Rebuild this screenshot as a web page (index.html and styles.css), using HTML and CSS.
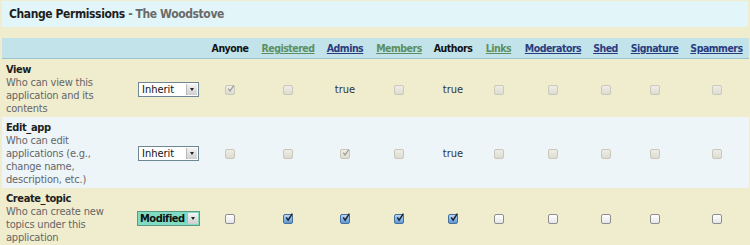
FILE: index.html
```html
<!DOCTYPE html>
<html>
<head>
<meta charset="utf-8">
<link rel="stylesheet" href="styles.css">
</head>
<body>
<div class="page">
  <div class="titlebar"><span class="title-main">Change Permissions</span><span class="title-sub"> - The Woodstove</span></div>
  <table class="perms">
    <colgroup>
      <col class="c-label"><col class="c-sel">
      <col class="c1"><col class="c2"><col class="c3"><col class="c4"><col class="c5">
      <col class="c6"><col class="c7"><col class="c8"><col class="c9"><col class="c10">
    </colgroup>
    <thead>
      <tr>
        <th></th><th></th>
        <th class="plain">Anyone</th>
        <th><a class="visited">Registered</a></th>
        <th><a class="link">Admins</a></th>
        <th><a class="visited">Members</a></th>
        <th class="plain">Authors</th>
        <th><a class="visited">Links</a></th>
        <th><a class="link">Moderators</a></th>
        <th><a class="link">Shed</a></th>
        <th><a class="link">Signature</a></th>
        <th><a class="link">Spammers</a></th>
      </tr>
    </thead>
    <tbody>
      <tr class="row-a">
        <td class="label"><div class="name">View</div><div class="desc">Who can view this application and its contents</div></td>
        <td class="sel"><span class="dropdown"><span class="dd-text">Inherit</span><span class="dd-btn"><span class="tri"></span></span></span></td>
        <td><span class="cb dis"><svg viewBox="0 0 10 10"><path d="M2.3 4.6 L4 7 L7.8 1.6" fill="none" stroke="#9a9a92" stroke-width="1.2"/></svg></span></td>
        <td><span class="cb dis"></span></td>
        <td class="val">true</td>
        <td><span class="cb dis"></span></td>
        <td class="val">true</td>
        <td><span class="cb dis"></span></td>
        <td><span class="cb dis"></span></td>
        <td><span class="cb dis"></span></td>
        <td><span class="cb dis"></span></td>
        <td><span class="cb dis"></span></td>
      </tr>
      <tr class="row-b">
        <td class="label"><div class="name">Edit_app</div><div class="desc">Who can edit applications (e.g., change name, description, etc.)</div></td>
        <td class="sel"><span class="dropdown"><span class="dd-text">Inherit</span><span class="dd-btn"><span class="tri"></span></span></span></td>
        <td><span class="cb dis"></span></td>
        <td><span class="cb dis"></span></td>
        <td><span class="cb dis"><svg viewBox="0 0 10 10"><path d="M2.3 4.6 L4 7 L7.8 1.6" fill="none" stroke="#9a9a92" stroke-width="1.2"/></svg></span></td>
        <td><span class="cb dis"></span></td>
        <td class="val">true</td>
        <td><span class="cb dis"></span></td>
        <td><span class="cb dis"></span></td>
        <td><span class="cb dis"></span></td>
        <td><span class="cb dis"></span></td>
        <td><span class="cb dis"></span></td>
      </tr>
      <tr class="row-a">
        <td class="label"><div class="name">Create_topic</div><div class="desc">Who can create new topics under this application</div></td>
        <td class="sel"><span class="dropdown mod"><span class="dd-text">Modified</span><span class="dd-btn"><span class="tri"></span></span></span></td>
        <td><span class="cb"></span></td>
        <td><span class="cb on"><svg viewBox="0 0 10 10"><path d="M2.2 4.4 L4.1 7.2 L8.4 0.6" fill="none" stroke="#1c2430" stroke-width="1.5"/></svg></span></td>
        <td><span class="cb on"><svg viewBox="0 0 10 10"><path d="M2.2 4.4 L4.1 7.2 L8.4 0.6" fill="none" stroke="#1c2430" stroke-width="1.5"/></svg></span></td>
        <td><span class="cb on"><svg viewBox="0 0 10 10"><path d="M2.2 4.4 L4.1 7.2 L8.4 0.6" fill="none" stroke="#1c2430" stroke-width="1.5"/></svg></span></td>
        <td><span class="cb on"><svg viewBox="0 0 10 10"><path d="M2.2 4.4 L4.1 7.2 L8.4 0.6" fill="none" stroke="#1c2430" stroke-width="1.5"/></svg></span></td>
        <td><span class="cb"></span></td>
        <td><span class="cb"></span></td>
        <td><span class="cb"></span></td>
        <td><span class="cb"></span></td>
        <td><span class="cb"></span></td>
      </tr>
    </tbody>
  </table>
</div>
</body>
</html>
```
FILE: styles.css
```css
html, body {
  margin: 0;
  padding: 0;
  background: #f0edcf;
}
body {
  font-family: "DejaVu Sans Condensed", "DejaVu Sans", sans-serif;
  font-stretch: condensed;
  font-size: 11px;
  color: #222;
}
.page {
  padding: 1px 1px 0 2px;
}
.titlebar {
  background: #e2f5f9;
  height: 26px;
  line-height: 27px;
  padding-left: 7px;
  font-size: 12px;
  letter-spacing: -0.4px;
  font-weight: bold;
  margin-right: 1px;
}
.title-main { color: #1e1e1e; }
.title-sub { color: #6a6a6a; }

.perms {
  margin-top: 11px;
  width: 747px;
  table-layout: fixed;
  border-collapse: collapse;
}
.c-label { width: 133px; }
.c-sel { width: 70px; }
.c1 { width: 50px; }
.c2 { width: 66px; }
.c3 { width: 48px; }
.c4 { width: 60px; }
.c5 { width: 48px; }
.c6 { width: 43px; }
.c7 { width: 66px; }
.c8 { width: 39px; }
.c9 { width: 59px; }
.c10 { width: 65px; }

.perms thead tr {
  background: #c2e3e9;
  border-bottom: 1px solid #9fc3cd;
}
.perms th {
  height: 20px;
  padding: 0;
  font-size: 10.5px;
  letter-spacing: -0.5px;
  font-weight: bold;
  text-align: center;
  vertical-align: middle;
  white-space: nowrap;
}
.plain { color: #111; }
.link { color: #2a3c80; text-decoration: underline; }
.visited { color: #5b8f62; text-decoration: underline; }

.row-a { background: #f0edcf; }
.row-b { background: #edf5f9; }
.perms td {
  padding: 4px 0 2px 0;
  text-align: center;
  vertical-align: middle;
}
.perms td.label {
  text-align: left;
  padding-left: 4px;
  padding-right: 20px;
  line-height: 13px;
}
.name {
  font-weight: bold;
  letter-spacing: -0.4px;
  color: #1e1e1e;
}
.desc {
  color: #666;
  letter-spacing: -0.2px;
}
.perms td.sel {
  text-align: left;
  padding-left: 3px;
}
.val {
  color: #333;
}

.dropdown {
  display: inline-flex;
  align-items: stretch;
  width: 61px;
  height: 15px;
  box-sizing: border-box;
  border: 1px solid #6f8794;
  background: #fff;
  vertical-align: middle;
}
.dd-text {
  flex: 1;
  line-height: 13px;
  padding-left: 3px;
  color: #111;
}
.dd-btn {
  width: 10px;
  margin: 1px 1px 1px 0;
  background: linear-gradient(#f4f4f4, #cfcfcf);
  border-left: 1px solid #b8b8b8;
  display: flex;
  align-items: center;
  justify-content: center;
}
.tri {
  width: 0;
  height: 0;
  border-left: 2.5px solid transparent;
  border-right: 2.5px solid transparent;
  border-top: 3px solid #222;
}
.dropdown.mod {
  width: 63px;
  margin-left: -1px;
  background: #7fdcc3;
  border-color: #5a9a88;
}
.dropdown.mod .dd-text {
  font-weight: bold;
  letter-spacing: -0.5px;
  padding-left: 2px;
}

.cb {
  display: inline-block;
  width: 10px;
  height: 10px;
  box-sizing: border-box;
  border: 1px solid #8e8e8e;
  border-radius: 2px;
  background: linear-gradient(#ffffff, #e6e6e6);
  vertical-align: middle;
  position: relative;
}
.cb.dis {
  border-color: #c9c8bb;
  background: linear-gradient(#eeeee6, #dedcd0);
}
.cb.on {
  border-color: #48709a;
  background: linear-gradient(#b9d8f5, #5c9ad6);
}
.cb svg {
  position: absolute;
  left: 0;
  top: -2px;
  width: 10px;
  height: 10px;
  overflow: visible;
}
```
